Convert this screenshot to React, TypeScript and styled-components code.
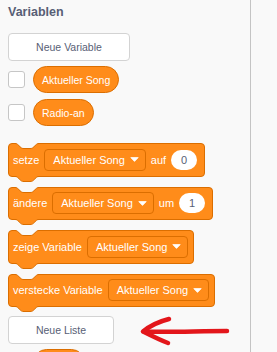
import styled, { createGlobalStyle } from "styled-components";

const ORANGE = '#ff8c1a';
const ORANGE_DARK = '#db6e00';
const BG = '#f9f9f9';

const GlobalStyle = createGlobalStyle`
    * { box-sizing: border-box; }
    body {
        margin: 0;
        background: ${BG};
        font-family: "Liberation Sans", Arial, sans-serif;
    }
`

const NOTCH_CURVE = 'M0,0.5 C1.5,0.5 2.2,1 3,1.8 L6,4.6 C6.8,5.3 7.5,5.5 9,5.5 H15 C16.5,5.5 17.2,5.3 18,4.6 L21,1.8 C21.8,1 22.5,0.5 24,0.5';

const Notch = () => (
    <NotchSvg width="24" height="7" viewBox="0 0 24 7" $place="top">
        <path d={NOTCH_CURVE + ' V0 H0 Z'} fill={BG} />
        <path d={NOTCH_CURVE} fill="none" stroke={ORANGE_DARK} strokeWidth="1" />
    </NotchSvg>
)

const Tab = () => (
    <NotchSvg width="24" height="7" viewBox="0 0 24 7" $place="bottom">
        <path d={NOTCH_CURVE + ' V0 H0 Z'} fill={ORANGE} />
        <path d={NOTCH_CURVE} fill="none" stroke={ORANGE_DARK} strokeWidth="1" />
    </NotchSvg>
)

const Caret = () => (
    <svg width="9" height="5" viewBox="0 0 9 5">
        <path d="M0.8,0.6 H8.2 L4.5,4.4 Z" fill="#fff" stroke="#fff" strokeWidth="0.8" strokeLinejoin="round" />
    </svg>
)

const Dropdown = ({ value }: { value: string }) => (
    <Field>
        {value}
        <Caret />
    </Field>
)

const App = () => {
    return (
        <>
            <GlobalStyle />
            <Page>
                <Flyout>
                    <Heading>Variablen</Heading>
                    <FlyoutButton $width={122}>Neue Variable</FlyoutButton>

                    <CheckRow $top={5}>
                        <Checkbox />
                        <Reporter>Aktueller Song</Reporter>
                    </CheckRow>
                    <CheckRow $top={6}>
                        <Checkbox />
                        <Reporter>Radio-an</Reporter>
                    </CheckRow>

                    <Block $top={17} $right={6}>
                        <Notch />
                        <Label>setze</Label>
                        <Dropdown value="Aktueller Song" />
                        <Label>auf</Label>
                        <Oval>0</Oval>
                        <Tab />
                    </Block>
                    <Block $top={10} $right={6}>
                        <Notch />
                        <Label>ändere</Label>
                        <Dropdown value="Aktueller Song" />
                        <Label>um</Label>
                        <Oval>1</Oval>
                        <Tab />
                    </Block>
                    <Block $top={10} $right={5}>
                        <Notch />
                        <Label>zeige Variable</Label>
                        <Dropdown value="Aktueller Song" />
                        <Tab />
                    </Block>
                    <Block $top={10} $right={5}>
                        <Notch />
                        <Label>verstecke Variable</Label>
                        <Dropdown value="Aktueller Song" />
                        <Tab />
                    </Block>

                    <FlyoutButton $width={106} $top={9}>Neue Liste</FlyoutButton>

                    {/* next list row, only its top edge is visible */}
                    <CheckRow $top={5}>
                        <Checkbox />
                        <Reporter $width={52} />
                    </CheckRow>
                </Flyout>
                <Workspace />

                <Arrow width="96" height="36" viewBox="0 0 96 36">
                    <path d="M31,5 C23,7 13,11 5,17.5 C12,21 22,26 30,29"
                        fill="none" stroke="#e3161b" strokeWidth="4.5" strokeLinecap="round" strokeLinejoin="round" />
                    <path d="M6,17.5 C30,18.5 60,17 89,17"
                        fill="none" stroke="#e3161b" strokeWidth="4.5" strokeLinecap="round" />
                </Arrow>
            </Page>
        </>
    )
}

const Page = styled.div`
    position: relative;
    display: flex;
    width: 277px;
    height: 352px;
    overflow: hidden;
    background: ${BG};
`

const Flyout = styled.div`
    width: 251px;
    flex-shrink: 0;
    display: flex;
    flex-direction: column;
    align-items: flex-start;
    padding: 4px 0 0 8px;
    border-right: 1px solid #c4c4c4;

    & > * {
        flex-shrink: 0;
    }
`

const Workspace = styled.div`
    flex: 1;
`

const Heading = styled.div`
    font-size: 12.5px;
    line-height: 16px;
    font-weight: bold;
    color: #575e75;
`

const FlyoutButton = styled.button<{ $width: number; $top?: number }>`
    width: ${p => p.$width}px;
    height: 28px;
    margin-top: ${p => p.$top ?? 13}px;
    padding: 0;
    background: #fff;
    border: 1px solid #d3d3d3;
    border-radius: 4px;
    font-family: inherit;
    font-size: 10.5px;
    color: #575e75;
`

const CheckRow = styled.div<{ $top: number }>`
    display: flex;
    align-items: center;
    gap: 8px;
    margin-top: ${p => p.$top}px;
    height: 27px;
`

const Checkbox = styled.div`
    width: 17px;
    height: 17px;
    background: #fff;
    border: 1px solid #c6c6c6;
    border-radius: 3px;
`

const Reporter = styled.div<{ $width?: number }>`
    height: 27px;
    ${p => p.$width ? `width: ${p.$width}px;` : ''}
    display: flex;
    align-items: center;
    padding: 0 8px 0 8px;
    background: ${ORANGE};
    border: 1px solid ${ORANGE_DARK};
    border-radius: 14px;
    color: #fff;
    font-size: 10.5px;
`

const Block = styled.div<{ $top: number; $right: number }>`
    position: relative;
    display: flex;
    align-items: center;
    gap: 5px;
    height: 33.5px;
    margin-top: ${p => p.$top}px;
    padding: 0 ${p => p.$right}px 0 4px;
    background: ${ORANGE};
    border: 1px solid ${ORANGE_DARK};
    border-radius: 4px;
    color: #fff;
    font-size: 11px;
`

const NotchSvg = styled.svg<{ $place: 'top' | 'bottom' }>`
    position: absolute;
    left: 6px;
    ${p => p.$place === 'top' ? 'top: -1px;' : 'top: 100%;'}
    overflow: visible;
`

const Label = styled.span`
    white-space: nowrap;
`

const Field = styled.div`
    display: flex;
    align-items: center;
    gap: 5px;
    height: 22px;
    padding: 0 6px 0 8px;
    border: 1px solid ${ORANGE_DARK};
    border-radius: 4px;
    white-space: nowrap;
`

const Oval = styled.div`
    min-width: 26px;
    height: 20px;
    margin-right: 1px;
    display: flex;
    align-items: center;
    justify-content: center;
    background: #fff;
    border-radius: 10px;
    color: #575e75;
    font-size: 11px;
`

const Arrow = styled.svg`
    position: absolute;
    left: 138px;
    top: 314px;
`

export default App;
